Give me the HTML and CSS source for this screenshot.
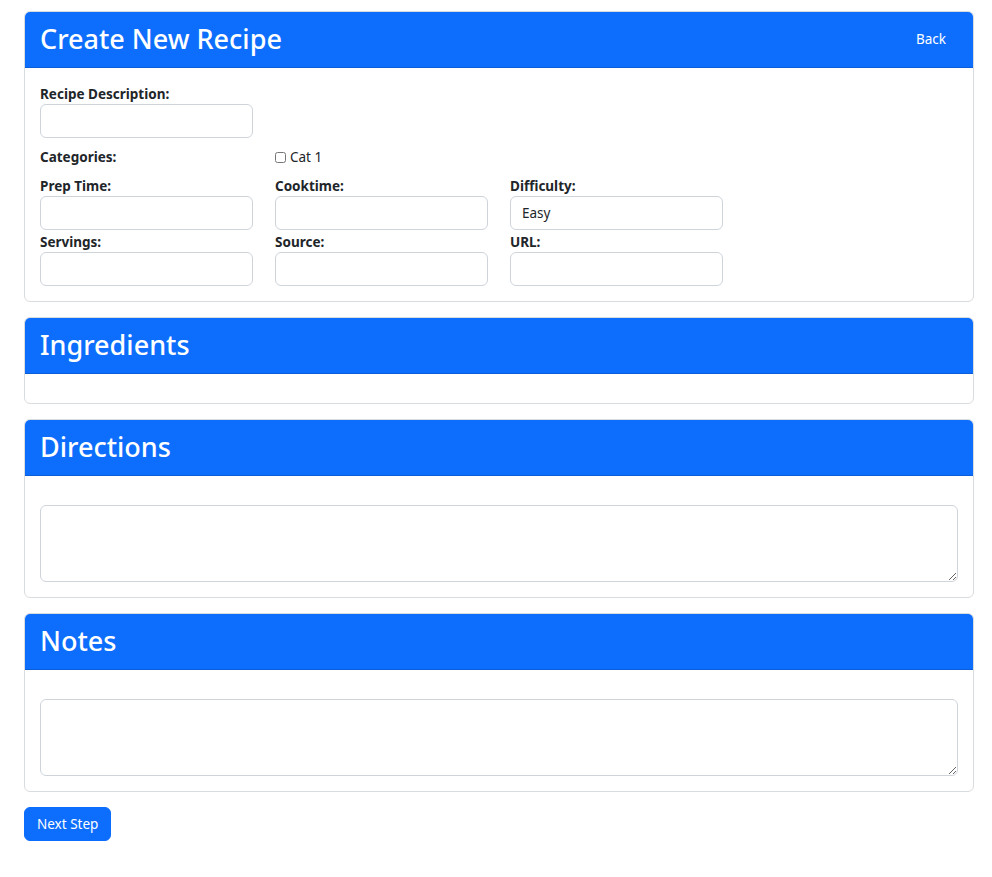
FILE: index.html
```html
<!DOCTYPE html>
<html>
<head>
<meta charset="utf-8">
<link rel="stylesheet" href="styles.css">
</head>
<body>
<div class="page">
  <div class="card">
    <div class="card-header">
      <h1 class="card-title">Create New Recipe</h1>
      <button class="btn btn-sm">Back</button>
    </div>
    <div class="card-body">
      <div class="field">
        <label class="label">Recipe Description:</label>
        <input class="input" type="text">
      </div>
      <div class="cat-row">
        <label class="label cat-label">Categories:</label>
        <label class="check"><input type="checkbox" class="checkbox"> Cat 1</label>
      </div>
      <div class="grid">
        <div class="field"><label class="label">Prep Time:</label><input class="input" type="text"></div>
        <div class="field"><label class="label">Cooktime:</label><input class="input" type="text"></div>
        <div class="field"><label class="label">Difficulty:</label><input class="input" type="text" value="Easy"></div>
        <div class="field"><label class="label">Servings:</label><input class="input" type="text"></div>
        <div class="field"><label class="label">Source:</label><input class="input" type="text"></div>
        <div class="field"><label class="label">URL:</label><input class="input" type="text"></div>
      </div>
    </div>
  </div>

  <div class="card">
    <div class="card-header"><h1 class="card-title">Ingredients</h1></div>
    <div class="card-body empty"></div>
  </div>

  <div class="card">
    <div class="card-header"><h1 class="card-title">Directions</h1></div>
    <div class="card-body text-body"><textarea class="textarea"></textarea></div>
  </div>

  <div class="card">
    <div class="card-header"><h1 class="card-title">Notes</h1></div>
    <div class="card-body text-body"><textarea class="textarea"></textarea></div>
  </div>

  <button class="btn btn-next">Next Step</button>
</div>
</body>
</html>
```
FILE: styles.css
```css
* { box-sizing: border-box; }
body {
  margin: 0;
  font-family: "Noto Sans", "Open Sans", sans-serif;
  font-size: 14px;
  color: #212529;
  background: #fff;
}
.page {
  padding: 11px 18px 0 24px;
  display: flex;
  flex-direction: column;
  align-items: flex-start;
}
.card {
  width: 950px;
  border: 1px solid #d9dcdf;
  border-radius: 6px;
  margin-bottom: 15px;
  overflow: hidden;
}
.card-header {
  background: #0d6efd;
  border-bottom: 1px solid #0b5ed7;
  height: 56px;
  padding: 0 15px 2px;
  display: flex;
  align-items: center;
  justify-content: space-between;
}
.card-title {
  margin: 0;
  color: #fff;
  font-size: 27px;
  font-weight: 500;
  line-height: 1;
}
.btn {
  font-family: inherit;
  background: #0d6efd;
  color: #fff;
  border: 1px solid #0d6efd;
  border-radius: 6px;
  cursor: pointer;
}
.btn-sm {
  font-size: 13.5px;
  padding: 4px 11px;
}
.card-body {
  padding: 16px 15px 15px;
}
.card-body.empty { padding: 14px 15px 15px; }
.field {
  display: flex;
  flex-direction: column;
  width: 213px;
}
.label {
  font-weight: 700;
  font-size: 13.5px;
  line-height: 20px;
}
.input {
  height: 34px;
  border: 1px solid #ced4da;
  border-radius: 6px;
  padding: 0 11px;
  font-family: inherit;
  font-size: 13.5px;
  color: #212529;
}
.cat-row {
  display: flex;
  align-items: center;
  margin: 9px 0 9px;
}
.cat-label { width: 235px; }
.check {
  display: flex;
  align-items: center;
  gap: 4px;
  font-size: 13.5px;
  line-height: 20px;
}
.checkbox { margin: 0; width: 11px; height: 11px; }
.grid {
  display: grid;
  grid-template-columns: 213px 213px 213px;
  column-gap: 22px;
  row-gap: 2px;
}
.text-body { padding: 29px 15px 15px; }
.textarea {
  display: block;
  width: 100%;
  height: 77px;
  border: 1px solid #ced4da;
  border-radius: 6px;
  font-family: inherit;
}
.btn-next {
  font-size: 13.5px;
  height: 34px;
  padding: 0 12px;
}
```
